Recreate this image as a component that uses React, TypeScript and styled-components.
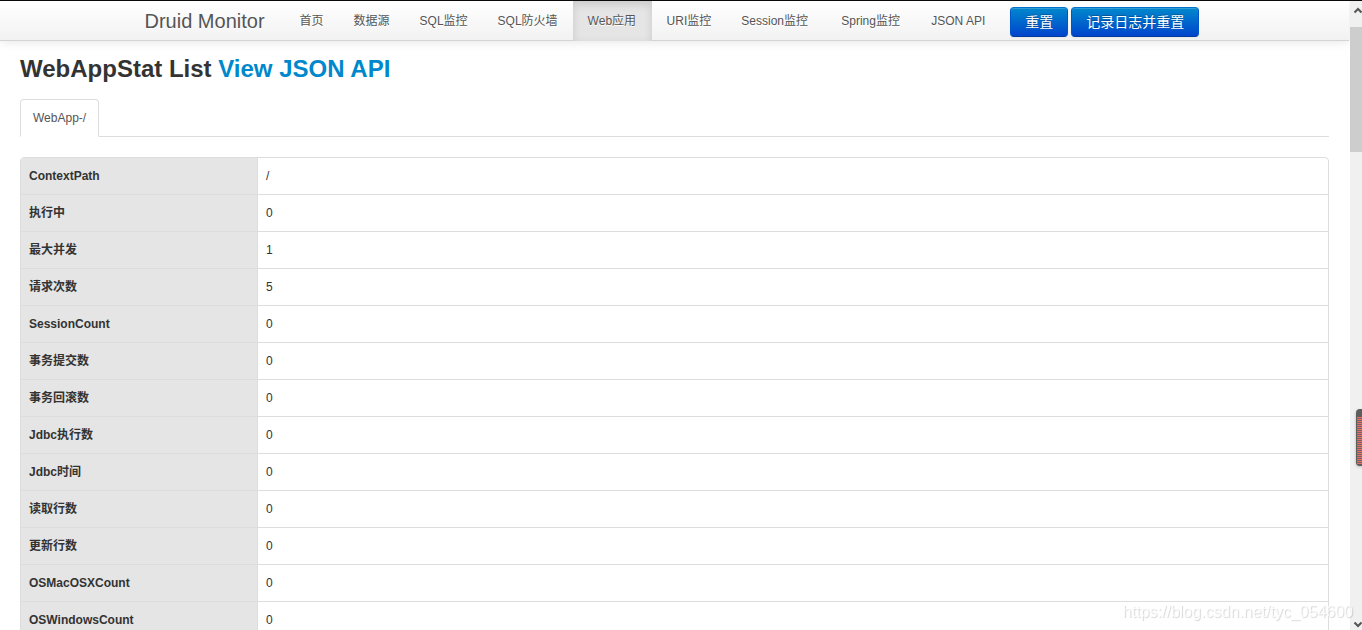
import React from "react";
import styled, { createGlobalStyle } from "styled-components";

const GlobalStyle = createGlobalStyle`
  * {
    box-sizing: border-box;
  }

  body {
    margin: 0;
    background: #fff;
    color: #333;
    font-family: "Liberation Sans", Arial, "Noto Sans CJK SC", sans-serif;
    font-size: 12px;
    line-height: 20px;
  }
`;

const Window = styled.div`
  display: flex;
  height: 100vh;
  overflow: hidden;
  border-top: 1px solid #0a0a0a;
`;

const Page = styled.div`
  flex: 1;
  min-width: 0;
  overflow: hidden;
`;

const Navbar = styled.header`
  height: 40px;
  margin-right: 1px;
  background: linear-gradient(to bottom, #fff, #f2f2f2);
  border-bottom: 1px solid #d4d4d4;
  box-shadow: 0 1px 10px rgba(0, 0, 0, 0.1);
`;

const NavContainer = styled.div`
  display: flex;
  max-width: 1060px;
  margin: 0 auto;
`;

const Brand = styled.a`
  padding: 10px 20px 10px 0;
  color: #555;
  font-size: 20px;
  text-decoration: none;
  text-shadow: 0 1px 0 #fff;
  white-space: nowrap;
`;

const Nav = styled.nav`
  display: flex;
  margin-right: 10px;
`;

const NavLink = styled.a<{ $active?: boolean; $minWidth?: number }>`
  height: 40px;
  min-width: ${(p) => (p.$minWidth ? `${p.$minWidth}px` : "auto")};
  padding: 10px 15px;
  color: #555;
  text-decoration: none;
  text-shadow: 0 1px 0 #fff;
  white-space: nowrap;
  background: ${(p) => (p.$active ? "#e5e5e5" : "transparent")};
  box-shadow: ${(p) =>
    p.$active ? "inset 0 3px 8px rgba(0, 0, 0, 0.125)" : "none"};
`;

const Buttons = styled.div`
  display: flex;
  gap: 3px;
  padding-top: 6px;
`;

const Button = styled.button`
  height: 30px;
  padding: 4px 14px;
  border: 1px solid;
  border-color: #0074cc #05c #003c99;
  border-radius: 4px;
  background: linear-gradient(to bottom, #08c, #04c);
  box-shadow:
    inset 0 1px 0 rgba(255, 255, 255, 0.2),
    0 1px 2px rgba(0, 0, 0, 0.05);
  color: #fff;
  font-family: inherit;
  font-size: 14px;
  line-height: 20px;
  text-shadow: 0 -1px 0 rgba(0, 0, 0, 0.25);
  white-space: nowrap;
`;

const Content = styled.main`
  padding: 8px 21px 0 20px;
`;

const Title = styled.h3`
  margin: 0 0 10px;
  font-size: 24px;
  line-height: 40px;

  a {
    color: #08c;
    text-decoration: none;
  }
`;

const Tabs = styled.div`
  display: flex;
  margin-bottom: 20px;
  border-bottom: 1px solid #ddd;
`;

const Tab = styled.a`
  margin-bottom: -1px;
  padding: 8px 12px;
  border: 1px solid #ddd;
  border-bottom-color: #fff;
  border-radius: 4px 4px 0 0;
  background: #fff;
  color: #555;
  text-decoration: none;
`;

const Table = styled.table`
  width: 100%;
  border: 1px solid #ddd;
  border-radius: 4px;
  border-collapse: separate;
  border-spacing: 0;
  table-layout: fixed;
  overflow: hidden;
`;

const TR = styled.tr`
  & + & > * {
    border-top: 1px solid #ddd;
  }
`;

const TH = styled.th`
  width: 236px;
  padding: 8px;
  background: #e5e5e5;
  text-align: left;
`;

const TD = styled.td`
  padding: 8px;
  border-left: 1px solid #ddd;
`;

const Scrollbar = styled.div`
  display: flex;
  flex-direction: column;
  width: 12px;
  background: #f0f0f0;
`;

const Arrow = styled.svg`
  display: block;
  width: 12px;
  height: 26px;
  fill: none;
  stroke: #555;
  stroke-width: 2;
`;

const Thumb = styled.div`
  height: 125px;
  margin-bottom: auto;
  background: #cdcdcd;
`;

const SideHandle = styled.div`
  position: fixed;
  top: 409px;
  right: 0;
  width: 6px;
  height: 57px;
  padding: 8px 0 2px 1px;
  border-radius: 4px 0 0 4px;
  background: #5c5c5c;
  box-shadow: 0 1px 3px rgba(0, 0, 0, 0.25);

  &::before {
    content: "";
    display: block;
    height: 100%;
    background: repeating-linear-gradient(#f4695f 0 1px, #6a6a6a 1px 2px);
  }
`;

const Watermark = styled.div`
  position: fixed;
  right: 9px;
  bottom: 8px;
  color: rgba(255, 255, 255, 0.8);
  font-size: 16px;
  text-shadow: 1px 1px 1px rgba(0, 0, 0, 0.16);
  pointer-events: none;
`;

const links = [
  { label: "首页" },
  { label: "数据源" },
  { label: "SQL监控" },
  { label: "SQL防火墙" },
  { label: "Web应用", active: true, minWidth: 79 },
  { label: "URI监控" },
  { label: "Session监控", minWidth: 100 },
  { label: "Spring监控", minWidth: 90 },
  { label: "JSON API" }
];

const stats = [
  { name: "ContextPath", value: "/" },
  { name: "执行中", value: "0" },
  { name: "最大并发", value: "1" },
  { name: "请求次数", value: "5" },
  { name: "SessionCount", value: "0" },
  { name: "事务提交数", value: "0" },
  { name: "事务回滚数", value: "0" },
  { name: "Jdbc执行数", value: "0" },
  { name: "Jdbc时间", value: "0" },
  { name: "读取行数", value: "0" },
  { name: "更新行数", value: "0" },
  { name: "OSMacOSXCount", value: "0" },
  { name: "OSWindowsCount", value: "0" }
];

function StatTable({ rows }: { rows: { name: string; value: string }[] }) {
  return (
    <Table>
      <tbody>
        {rows.map((row) => (
          <TR key={row.name}>
            <TH scope="row">{row.name}</TH>
            <TD>{row.value}</TD>
          </TR>
        ))}
      </tbody>
    </Table>
  );
}

function App() {
  return (
    <>
      <GlobalStyle />
      <Window>
        <Page>
          <Navbar>
            <NavContainer>
              <Brand href="#">Druid Monitor</Brand>
              <Nav>
                {links.map((link) => (
                  <NavLink
                    key={link.label}
                    href="#"
                    $active={link.active}
                    $minWidth={link.minWidth}
                  >
                    {link.label}
                  </NavLink>
                ))}
              </Nav>
              <Buttons>
                <Button type="button">重置</Button>
                <Button type="button">记录日志并重置</Button>
              </Buttons>
            </NavContainer>
          </Navbar>
          <Content>
            <Title>
              WebAppStat List <a href="#">View JSON API</a>
            </Title>
            <Tabs>
              <Tab href="#">WebApp-/</Tab>
            </Tabs>
            <StatTable rows={stats} />
          </Content>
        </Page>
        <Scrollbar>
          <Arrow viewBox="0 0 12 26">
            <path d="M4.5 11.5 8 8l3.5 3.5" />
          </Arrow>
          <Thumb />
          <Arrow viewBox="0 0 12 26">
            <path d="M4.5 18.5 8 22l3.5-3.5" />
          </Arrow>
        </Scrollbar>
      </Window>
      <SideHandle />
      <Watermark>https://blog.csdn.net/tyc_054600</Watermark>
    </>
  );
}

export default App;
